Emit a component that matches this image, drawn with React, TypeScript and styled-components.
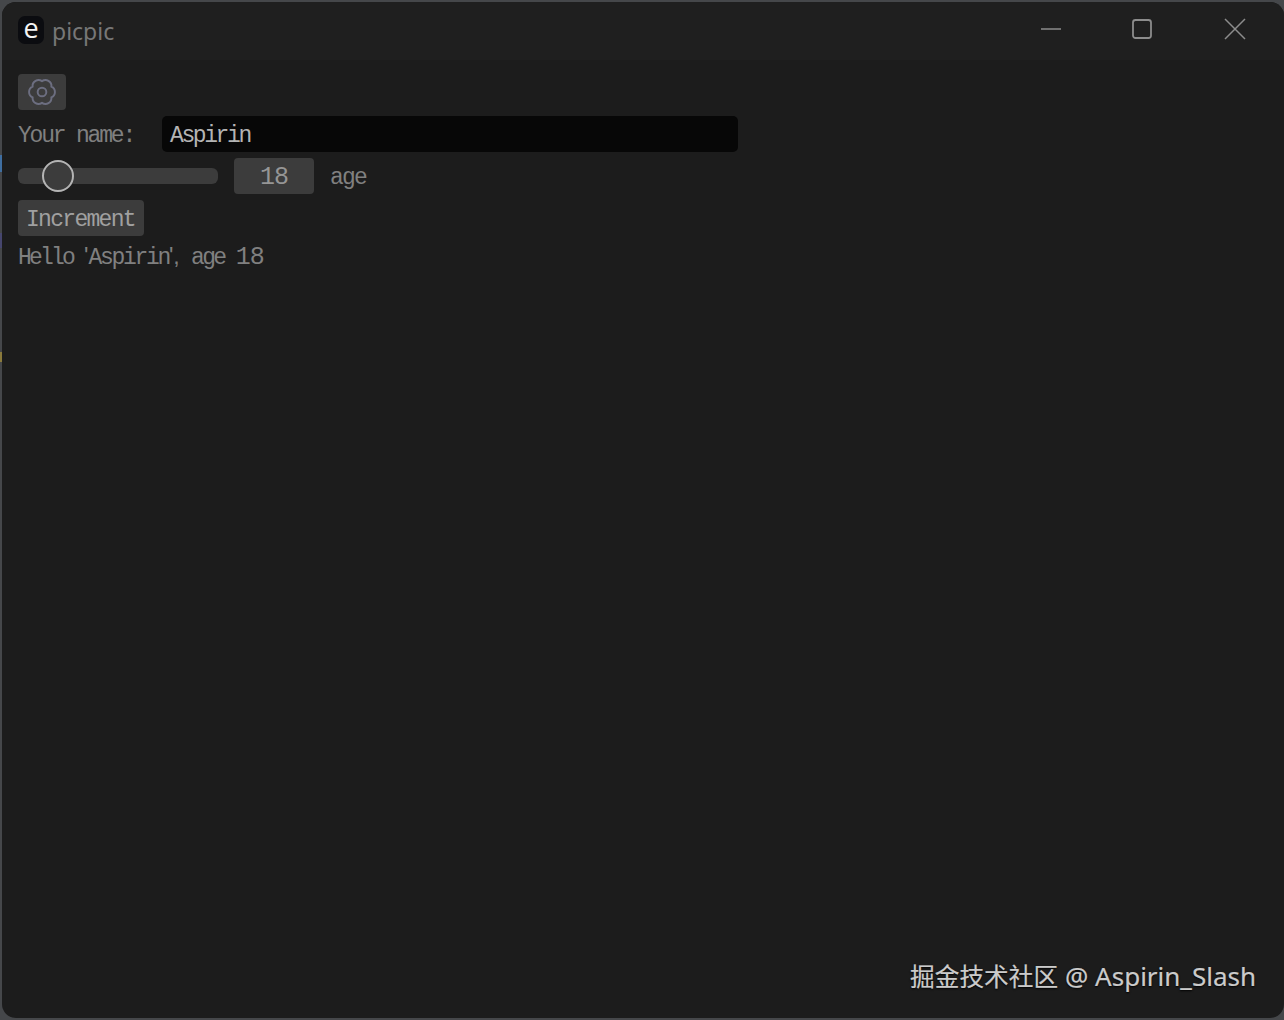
import React from "react";
import styled, { createGlobalStyle } from "styled-components";

const MONO = `"Liberation Mono", "DejaVu Sans Mono", monospace`;

const GlobalStyle = createGlobalStyle`
  html, body {
    margin: 0;
    padding: 0;
    background: #4a4b4c;
  }
  * {
    box-sizing: border-box;
  }
`;

// the desktop behind the window shows through along the left edge
const Frame = styled.div`
  width: 1284px;
  height: 1020px;
  padding: 2px 0 2px 2px;
  background:
    linear-gradient(
        to bottom,
        transparent 155px,
        #3f6ea0 155px,
        #3f6ea0 172px,
        transparent 172px,
        transparent 233px,
        #46466e 233px,
        #46466e 248px,
        transparent 248px,
        transparent 352px,
        #8a7a3c 352px,
        #8a7a3c 362px,
        transparent 362px
      )
      left top / 2px 100% no-repeat,
    #45474a;
  overflow: hidden;
`;

const Window = styled.div`
  position: relative;
  display: flex;
  flex-direction: column;
  height: 100%;
  background: #1c1c1c;
  border-radius: 14px;
  overflow: hidden;
`;

const TitleBar = styled.div`
  display: flex;
  align-items: center;
  height: 58px;
  flex-shrink: 0;
  padding-left: 16px;
  padding-right: 3px;
  padding-bottom: 4px;
  background: #1f1f1f;
`;

const AppIcon = styled.div`
  display: flex;
  align-items: center;
  justify-content: center;
  width: 26px;
  height: 28px;
  margin-top: 2px;
  padding-bottom: 5px;
  border-radius: 7px;
  background: #0b0c10;
  color: #f4f4f4;
  font: 27px "Open Sans", sans-serif;
`;

const AppName = styled.div`
  margin-left: 8px;
  margin-top: 3px;
  color: #777;
  font: 23px "Noto Sans", sans-serif;
  flex: 1;
`;

const ControlButton = styled.div`
  display: flex;
  align-items: center;
  justify-content: center;
  width: 92px;
  height: 54px;
  color: #8c8c8c;
`;

const Content = styled.div`
  display: flex;
  flex-direction: column;
  gap: 6px;
  padding: 14px 16px;
  font: 23px ${MONO};
  color: #808080;
`;

const Row = styled.div`
  display: flex;
  align-items: center;
  height: 36px;
`;

const Spaced = styled.span<{ $spacing: number }>`
  letter-spacing: ${(p) => p.$spacing}px;
`;

const Digits = styled.span`
  font-size: 25px;
  letter-spacing: -1px;
`;

const IconButton = styled.div`
  display: flex;
  align-items: center;
  justify-content: center;
  width: 48px;
  height: 36px;
  border-radius: 4px;
  background: #3c3c3c;
  color: #6c6e80;
`;

const FieldLabel = styled.label`
  width: 144px;
  padding-top: 3px;
`;

const NameInput = styled.div`
  display: flex;
  align-items: center;
  width: 576px;
  height: 36px;
  padding: 3px 0 0 8px;
  border-radius: 5px;
  background: #070707;
  color: #b4b4b4;
`;

const SliderTrack = styled.div`
  position: relative;
  width: 200px;
  height: 16px;
  border-radius: 6px;
  background: #3c3c3c;
`;

const SliderKnob = styled.div`
  position: absolute;
  left: 24px;
  top: -8px;
  width: 32px;
  height: 32px;
  border: 2px solid #b4b4b4;
  border-radius: 50%;
  background: #3c3c3c;
`;

const DragValue = styled.div`
  display: flex;
  align-items: center;
  justify-content: center;
  width: 80px;
  height: 36px;
  margin-left: 16px;
  padding-top: 2px;
  border-radius: 4px;
  background: #3c3c3c;
  color: #969696;
`;

const Hint = styled.span`
  margin-left: 16px;
  padding-top: 3px;
`;

const ActionButton = styled.div`
  display: flex;
  align-items: center;
  height: 36px;
  padding: 3px 9px 0 8px;
  border-radius: 4px;
  background: #3c3c3c;
  color: #a0a0a0;
`;

const Greeting = styled.div`
  margin-top: -4px;
  height: 36px;
  line-height: 36px;
  white-space: pre;
`;

const Narrow = styled.span`
  font-family: "Liberation Sans", sans-serif;
`;

const Watermark = styled.div`
  position: absolute;
  right: 28px;
  bottom: 24px;
  color: #cbcbcb;
  font: 26px "Noto Sans", "Noto Sans CJK SC", sans-serif;
  -webkit-text-stroke: 0.2px #cbcbcb;
  text-shadow: 0 1px 2px #000;
`;

const WatermarkCjk = styled.span`
  font-size: 24.7px;
`;

function GearIcon() {
  return (
    <svg width="32" height="32" viewBox="0 0 28 28" fill="none" stroke="currentColor" strokeWidth="1.7">
      <path d="M14 4.5A5.2 5.2 0 0 1 22.23 9.25A5.2 5.2 0 0 1 22.23 18.75A5.2 5.2 0 0 1 14 23.5A5.2 5.2 0 0 1 5.77 18.75A5.2 5.2 0 0 1 5.77 9.25A5.2 5.2 0 0 1 14 4.5Z" />
      <circle cx="14" cy="14" r="3.8" />
    </svg>
  );
}

function App() {
  return (
    <Frame>
      <GlobalStyle />
      <Window>
        <TitleBar>
          <AppIcon>e</AppIcon>
          <AppName>picpic</AppName>
          <ControlButton>
            <svg width="22" height="22" viewBox="0 0 22 22">
              <path d="M1 11h20" stroke="currentColor" strokeWidth="1.6" />
            </svg>
          </ControlButton>
          <ControlButton>
            <svg width="22" height="22" viewBox="0 0 22 22" fill="none">
              <rect x="1" y="2" width="18" height="18" rx="2.5" stroke="currentColor" strokeWidth="1.8" />
            </svg>
          </ControlButton>
          <ControlButton>
            <svg width="22" height="22" viewBox="0 0 22 22" fill="none">
              <path d="M1 1l20 20M21 1L1 21" stroke="currentColor" strokeWidth="1.5" />
            </svg>
          </ControlButton>
        </TitleBar>
        <Content>
          <IconButton>
            <GearIcon />
          </IconButton>
          <Row>
            <FieldLabel>
              <Spaced $spacing={-2.2}>Your name:</Spaced>
            </FieldLabel>
            <NameInput>
              <Spaced $spacing={-2.4}>Aspirin</Spaced>
            </NameInput>
          </Row>
          <Row>
            <SliderTrack>
              <SliderKnob />
            </SliderTrack>
            <DragValue>
              <Digits>18</Digits>
            </DragValue>
            <Hint>
              <Spaced $spacing={-1.8}>age</Spaced>
            </Hint>
          </Row>
          <Row>
            <ActionButton>
              <Spaced $spacing={-1.7}>Increment</Spaced>
            </ActionButton>
          </Row>
          <Greeting>
            <Spaced $spacing={-2.8}>Hello </Spaced>
            <Narrow>'</Narrow>
            <Spaced $spacing={-2.3}>Aspirin</Spaced>
            <Narrow>',</Narrow>
            <Spaced $spacing={-2.6}> age </Spaced>
            <Digits>18</Digits>
          </Greeting>
        </Content>
        <Watermark>
          <WatermarkCjk>掘金技术社区</WatermarkCjk> @ Aspirin_Slash
        </Watermark>
      </Window>
    </Frame>
  );
}

export default App;
